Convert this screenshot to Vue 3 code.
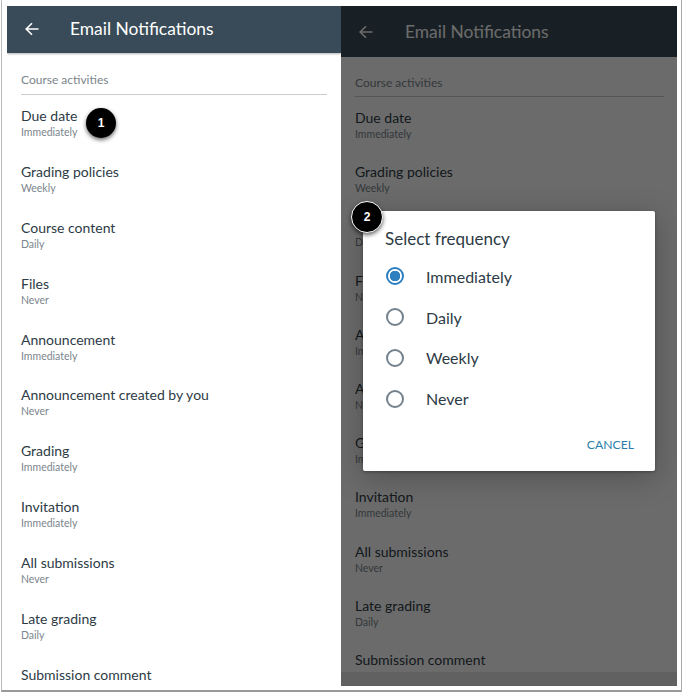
<script setup>
const rows = [
  { title: "Due date", value: "Immediately" },
  { title: "Grading policies", value: "Weekly" },
  { title: "Course content", value: "Daily" },
  { title: "Files", value: "Never" },
  { title: "Announcement", value: "Immediately" },
  { title: "Announcement created by you", value: "Never" },
  { title: "Grading", value: "Immediately" },
  { title: "Invitation", value: "Immediately" },
  { title: "All submissions", value: "Never" },
  { title: "Late grading", value: "Daily" },
  { title: "Submission comment", value: "" },
];
const options = ["Immediately", "Daily", "Weekly", "Never"];
</script>

<template>
  <div class="frame">
    <div class="shot">
      <section class="pane left">
        <header class="bar">
          <svg class="back" viewBox="0 0 16 16"><path d="M14.5 8H2.5M8 2.2 2.2 8 8 13.8" fill="none" stroke="currentColor" stroke-width="1.6" /></svg>
          <span class="bar-title">Email Notifications</span>
        </header>
        <div class="content">
          <div class="section">Course activities</div>
          <div v-for="row in rows" :key="row.title" class="row">
            <div class="row-title">{{ row.title }}</div>
            <div class="row-value">{{ row.value }}</div>
          </div>
        </div>
        <span class="badge badge-one">1</span>
      </section>

      <section class="pane right">
        <header class="bar">
          <svg class="back" viewBox="0 0 16 16"><path d="M14.5 8H2.5M8 2.2 2.2 8 8 13.8" fill="none" stroke="currentColor" stroke-width="1.6" /></svg>
          <span class="bar-title">Email Notifications</span>
        </header>
        <div class="content">
          <div class="section">Course activities</div>
          <div v-for="row in rows" :key="row.title" class="row">
            <div class="row-title">{{ row.title }}</div>
            <div class="row-value">{{ row.value }}</div>
          </div>
        </div>
        <div class="scrim"></div>
        <div class="dialog">
          <div class="dialog-title">Select frequency</div>
          <div v-for="(opt, i) in options" :key="opt" class="option">
            <span class="radio" :class="{ on: i === 0 }"></span>
            <span>{{ opt }}</span>
          </div>
          <div class="actions">CANCEL</div>
        </div>
        <span class="badge badge-two">2</span>
      </section>
    </div>
  </div>
</template>

<style>
html, body {
  margin: 0;
  background: #fff;
}
</style>

<style scoped>
.frame {
  width: 681px;
  height: 692px;
  margin-left: 1px;
  box-sizing: border-box;
  padding: 5px 4px 4px 5px;
  border: 1px solid #d8d8d8;
  border-bottom: 2px solid #9a9a9a;
  border-left-color: #bbb;
  border-right-color: #aaa;
  border-top: 0;
  font-family: Lato, "Open Sans", sans-serif;
  overflow: hidden;
}

.shot {
  display: flex;
  height: 680px;
  margin-top: 1px;
}

.pane {
  position: relative;
  overflow: hidden;
  background: #fff;
}

.left {
  width: 334px;
}

.right {
  width: 336px;
}

.bar {
  display: flex;
  align-items: center;
  box-sizing: border-box;
  color: #fff;
  background: #394b58;
}

.left .bar {
  height: 47px;
  padding-bottom: 1px;
  box-shadow: 0 1px 2px rgba(0, 0, 0, 0.3);
}

.right .bar {
  height: 51px;
  padding-top: 1px;
}

.back {
  width: 16px;
  height: 16px;
  flex: none;
  margin-left: 17px;
}

.bar-title {
  font-size: 17.4px;
  line-height: 22px;
}

.left .bar-title {
  margin-left: 30px;
}

.right .bar-title {
  margin-left: 31px;
}

.content {
  padding: 0 14px;
}

.section {
  color: #7b858c;
  font-size: 12px;
  line-height: 16px;
  border-bottom: 1px solid #c7cdd1;
}

.left .section {
  padding: 19px 0 6px;
  margin-bottom: 12px;
}

.right .section {
  padding: 18px 0 5px;
  margin-bottom: 12px;
  margin-right: -1px;
}

.row-title {
  color: #2d3b45;
  font-size: 14px;
  line-height: 18px;
}

.row-value {
  color: #7b858c;
  font-size: 10.5px;
  line-height: 14px;
}

.left .row {
  height: 55.9px;
}

.right .row {
  height: 54.2px;
}

.scrim {
  position: absolute;
  inset: 0;
  background: linear-gradient(rgba(0, 0, 0, 0.58) 0 98%, rgba(0, 0, 0, 0.62) 98% 100%);
}

.dialog {
  position: absolute;
  left: 22px;
  top: 205px;
  width: 292px;
  height: 260px;
  box-sizing: border-box;
  padding: 17px 21px 0 22px;
  background: #fff;
  border-radius: 2px;
  box-shadow: 0 6px 30px rgba(0, 0, 0, 0.25), 0 1px 3px rgba(0, 0, 0, 0.3);
  color: #2d3b45;
}

.dialog-title {
  font-size: 17px;
  line-height: 22px;
  margin-bottom: 6px;
}

.option {
  display: flex;
  align-items: center;
  gap: 22px;
  height: 40.75px;
  font-size: 16px;
  color: #2d3b45;
}

.radio {
  width: 18px;
  height: 18px;
  box-sizing: border-box;
  border: 2px solid #73818c;
  border-radius: 50%;
  flex: none;
  margin-left: 1px;
}

.radio.on {
  border-color: #2d7fc0;
  background: radial-gradient(circle, #2d7fc0 0 5px, #fff 5.5px);
}

.actions {
  margin-top: 17px;
  text-align: right;
  color: #2b7ea8;
  font-size: 12.2px;
  line-height: 18px;
}

.badge {
  position: absolute;
  width: 30px;
  height: 30px;
  border-radius: 50%;
  background: #000;
  color: #fff;
  font-family: "Liberation Sans", Arial, sans-serif;
  font-size: 12px;
  font-weight: 700;
  display: flex;
  align-items: center;
  justify-content: center;
  box-shadow: 0 2px 4px rgba(0, 0, 0, 0.6);
}

.badge-one {
  left: 79px;
  top: 102px;
}

.badge-two {
  left: 10px;
  top: 195px;
  border: 1px solid #fff;
}
</style>
